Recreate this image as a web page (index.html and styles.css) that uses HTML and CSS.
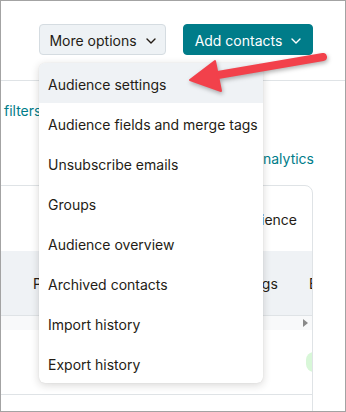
FILE: index.html
```html
<!DOCTYPE html>
<html>
<head>
<meta charset="utf-8">
<link rel="stylesheet" href="styles.css">
</head>
<body>
<div class="frame">
  <div class="topbar">
    <button class="btn btn-light"><span class="btn-label">More options</span>
      <svg class="chev" viewBox="0 0 10 6" width="10" height="6"><path d="M1 1l4 4 4-4" fill="none" stroke="currentColor" stroke-width="1.4" stroke-linecap="round" stroke-linejoin="round"/></svg>
    </button>
    <button class="btn btn-teal"><span class="btn-label">Add contacts</span>
      <svg class="chev" viewBox="0 0 10 6" width="10" height="6"><path d="M1 1l4 4 4-4" fill="none" stroke="currentColor" stroke-width="1.4" stroke-linecap="round" stroke-linejoin="round"/></svg>
    </button>
  </div>
  <div class="filters-row"><span class="link">filters</span></div>
  <div class="analytics-row"><span class="link">View analytics</span></div>
  <div class="card">
    <div class="card-top"><span>Audience</span></div>
    <div class="thead">
      <span class="th th-1">Phone number</span>
      <span class="th th-2">Tags</span>
      <span class="th th-3">Email marketing</span>
    </div>
    <div class="scroll-row"><span class="tri"></span></div>
    <div class="trow"><span class="pill">Subscribed</span></div>
    <div class="trow trow-short"></div>
  </div>

  <ul class="menu">
    <li class="menu-item active">Audience settings</li>
    <li class="menu-item">Audience fields and merge tags</li>
    <li class="menu-item">Unsubscribe emails</li>
    <li class="menu-item">Groups</li>
    <li class="menu-item">Audience overview</li>
    <li class="menu-item">Archived contacts</li>
    <li class="menu-item">Import history</li>
    <li class="menu-item">Export history</li>
  </ul>

  <svg class="arrow" width="346" height="412" viewBox="0 0 346 412">
    <line x1="323" y1="57" x2="212" y2="76" stroke="#f2414b" stroke-width="8" stroke-linecap="round"/>
    <polygon points="190,80 215,61 221,91" fill="#f2414b" stroke="#f2414b" stroke-width="2" stroke-linejoin="round"/>
  </svg>
</div>
</body>
</html>
```
FILE: styles.css
```css
* { box-sizing: border-box; }
html, body { margin: 0; padding: 0; background: #fff; }
body {
  font-family: Inter, "Noto Sans", sans-serif;
  font-size: 14px;
  color: #241c15;
}
.frame {
  position: relative;
  width: 346px;
  height: 412px;
  border: 1px solid #a3a3a3;
  overflow: hidden;
  background: #fff;
}
.topbar {
  display: flex;
  justify-content: flex-end;
  gap: 17px;
  padding: 23px 32px 0 0;
  height: 80px;
  border-bottom: 1px solid #dfe3e6;
}
.btn {
  display: flex;
  align-items: center;
  justify-content: center;
  height: 31px;
  border-radius: 4px;
  font-family: inherit;
  font-size: 14px;
  padding: 1px 0 0 0;
  gap: 9px;
  white-space: nowrap;
  cursor: pointer;
}
.btn-label { white-space: nowrap; }
.btn-light {
  width: 127px;
  background: #eef2f5;
  border: 1px solid #d5dce1;
  color: #241c15;
}
.btn-teal {
  width: 130px;
  background: #007c89;
  border: 1px solid #007c89;
  color: #fff;
}
.chev { flex: none; margin-top: 1px; }
.link { color: #007c89; }
.filters-row {
  margin-top: 20px;
  height: 20px;
  line-height: 20px;
  padding-left: 3px;
}
.analytics-row {
  margin-top: 28px;
  height: 20px;
  line-height: 20px;
  text-align: right;
  padding-right: 31px;
}
.card {
  margin: 16px 32px 0 -1px;
  border: 1px solid #dfe3e6;
  border-radius: 0 8px 0 0;
  overflow: hidden;
  height: 240px;
}
.card-top {
  height: 65px;
  display: flex;
  justify-content: flex-end;
  align-items: center;
  padding-right: 15px;
  padding-top: 1px;
}
.thead {
  height: 65px;
  background: #eff2f5;
  display: grid;
  grid-template-columns: 244px 64px 1fr;
  align-items: center;
  white-space: nowrap;
  border-bottom: 1px solid #dfe3e6;
}
.th { overflow: hidden; }
.th-1 { padding-left: 32px; }
.th-2 { padding-left: 1px; }
.th-3 { padding-left: 0; }
.scroll-row {
  height: 14px;
  background: #f8f9fa;
  display: flex;
  justify-content: flex-end;
  align-items: center;
  padding-right: 4px;
}
.tri {
  width: 0; height: 0;
  border-top: 4.5px solid transparent;
  border-bottom: 4.5px solid transparent;
  border-left: 5px solid #8a8a8a;
}
.trow {
  height: 65px;
  border-bottom: 1px solid #dfe3e6;
  display: flex;
  justify-content: flex-end;
  align-items: center;
}
.pill {
  display: block;
  width: 40px;
  height: 20px;
  margin-right: -34px;
  border-radius: 8px;
  background: #d8f7d8;
  color: transparent;
  overflow: hidden;
  font-size: 12px;
}
.menu {
  position: absolute;
  left: 38px;
  top: 62px;
  width: 224px;
  margin: 0;
  padding: 0;
  list-style: none;
  background: #fff;
  border-radius: 6px;
  box-shadow: 0 2px 8px rgba(36, 28, 21, 0.18), 0 0 1px rgba(36, 28, 21, 0.15);
  overflow: hidden;
}
.menu-item {
  height: 40px;
  line-height: 40px;
  padding: 2px 0 0 9px;
  white-space: nowrap;
}
.menu-item.active { background: #eff2f5; }
.arrow {
  position: absolute;
  left: -1px;
  top: -1px;
  pointer-events: none;
  filter: drop-shadow(1px 2px 2px rgba(0,0,0,0.3));
}
```
